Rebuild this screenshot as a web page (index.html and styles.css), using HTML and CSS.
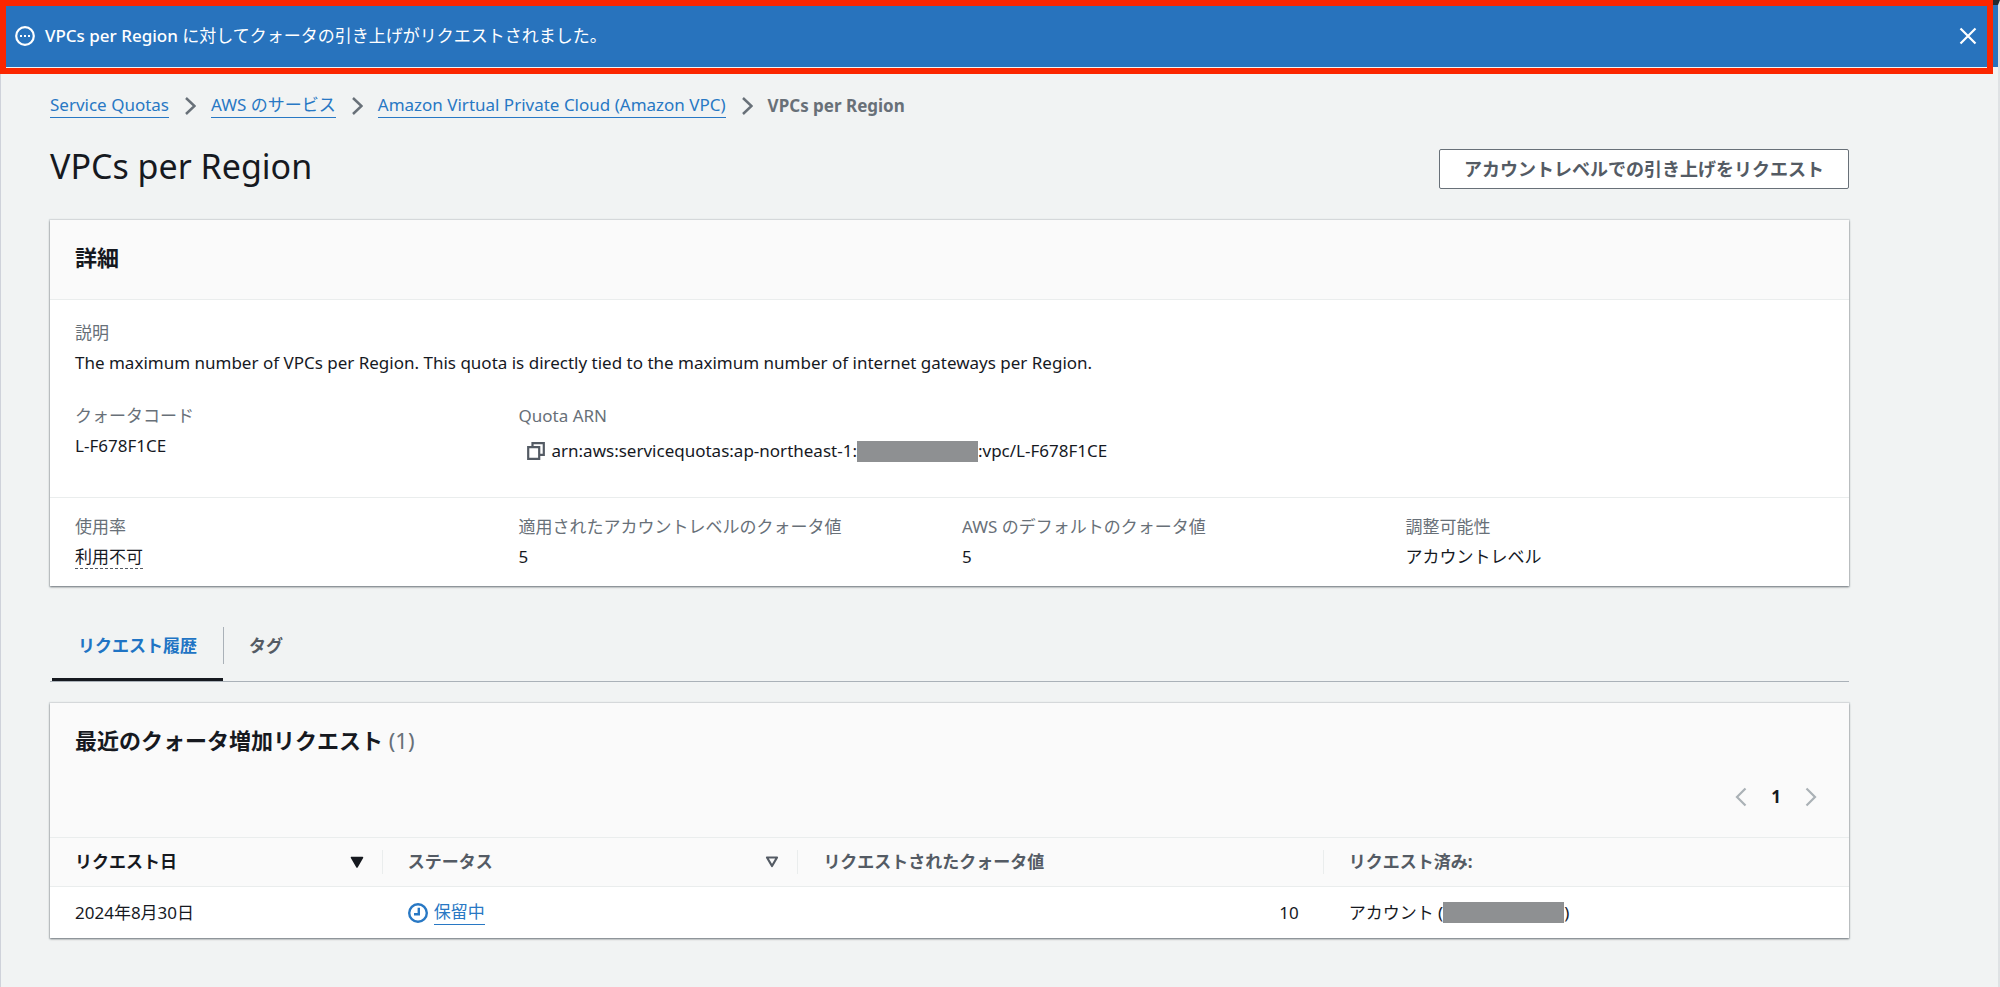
FILE: index.html
```html
<!DOCTYPE html>
<html lang="ja">
<head>
<meta charset="utf-8">
<title>VPCs per Region - Service Quotas</title>
<link rel="stylesheet" href="styles.css">
</head>
<body>
<div class="page">
  <div class="flash" role="status">
    <svg class="icon icon-flash" viewBox="0 0 20 20" aria-hidden="true"><circle cx="10" cy="10" r="8.8" fill="none" stroke="currentColor" stroke-width="2.2"/><path d="M5 9h2v2H5zM9 9h2v2H9zM13 9h2v2h-2z" fill="currentColor"/></svg>
    <p class="flash-text"><span class="semi">VPCs per Region</span> に対してクォータの引き上げがリクエストされました。</p>
    <button class="icon-button flash-close" type="button" aria-label="閉じる">
      <svg class="icon icon-close" viewBox="0 0 18 18" aria-hidden="true"><path d="M1.5 1.5 16.500 16.500M16.500 1.500 1.500 16.500" fill="none" stroke="currentColor" stroke-width="2.2"/></svg>
    </button>
    <div class="highlight"></div>
  </div>

  <main class="main">
    <nav class="breadcrumbs" aria-label="パンくず">
      <a class="link" href="#">Service Quotas</a>
      <svg class="icon icon-crumb" viewBox="0 0 12 18" aria-hidden="true"><path d="M2 1 10.500 9 2 17" fill="none" stroke="currentColor" stroke-width="2.5"/></svg>
      <a class="link" href="#">AWS のサービス</a>
      <svg class="icon icon-crumb" viewBox="0 0 12 18" aria-hidden="true"><path d="M2 1 10.500 9 2 17" fill="none" stroke="currentColor" stroke-width="2.5"/></svg>
      <a class="link" href="#">Amazon Virtual Private Cloud (Amazon VPC)</a>
      <svg class="icon icon-crumb" viewBox="0 0 12 18" aria-hidden="true"><path d="M2 1 10.500 9 2 17" fill="none" stroke="currentColor" stroke-width="2.5"/></svg>
      <span class="crumb-current">VPCs per Region</span>
    </nav>

    <header class="page-header">
      <h1 class="page-title">VPCs per Region</h1>
      <button class="button" type="button">アカウントレベルでの引き上げをリクエスト</button>
    </header>

    <section class="card">
      <div class="card-header"><h2 class="card-title">詳細</h2></div>
      <dl class="details details-main">
        <div class="field field-wide"><dt>説明</dt><dd>The maximum number of VPCs per Region. This quota is directly tied to the maximum number of internet gateways per Region.</dd></div>
        <div class="field"><dt>クォータコード</dt><dd>L-F678F1CE</dd></div>
        <div class="field"><dt>Quota ARN</dt>
          <dd class="arn">
            <button class="icon-button copy" type="button" aria-label="コピー"><svg class="icon icon-copy" viewBox="0 0 18 18" aria-hidden="true"><path d="M1.200 5.200h11v11.600h-11zM5.500 5V1.200h11.300v11.600H12.500" fill="none" stroke="currentColor" stroke-width="2.2"/></svg></button>
            <span>arn:aws:servicequotas:ap-northeast-1:</span><span class="redacted"></span><span>:vpc/L-F678F1CE</span>
          </dd>
        </div>
      </dl>
      <dl class="details details-values">
        <div class="field"><dt>使用率</dt><dd><span class="hint">利用不可</span></dd></div>
        <div class="field"><dt>適用されたアカウントレベルのクォータ値</dt><dd>5</dd></div>
        <div class="field"><dt>AWS のデフォルトのクォータ値</dt><dd>5</dd></div>
        <div class="field"><dt>調整可能性</dt><dd>アカウントレベル</dd></div>
      </dl>
    </section>

    <div class="tabs" role="tablist">
      <button class="tab tab-active" type="button" role="tab" aria-selected="true">リクエスト履歴</button>
      <button class="tab" type="button" role="tab" aria-selected="false">タグ</button>
    </div>

    <section class="card">
      <div class="table-header">
        <h2 class="card-title">最近のクォータ増加リクエスト <span class="counter">(1)</span></h2>
        <nav class="pagination" aria-label="ページ">
          <button class="icon-button" type="button" aria-label="前へ"><svg class="icon icon-page" viewBox="0 0 12 20" aria-hidden="true"><path d="M10.500 1.500 2 10l8.500 8.500" fill="none" stroke="currentColor" stroke-width="2.2"/></svg></button>
          <button class="page-number" type="button">1</button>
          <button class="icon-button" type="button" aria-label="次へ"><svg class="icon icon-page" viewBox="0 0 12 20" aria-hidden="true"><path d="M1.500 1.500 10 10l-8.500 8.500" fill="none" stroke="currentColor" stroke-width="2.2"/></svg></button>
        </nav>
      </div>
      <table class="table">
        <colgroup><col class="col-date"><col class="col-status"><col class="col-value"><col></colgroup>
        <thead>
          <tr>
            <th scope="col"><div class="th th-sorted">リクエスト日<svg class="icon icon-sort" viewBox="0 0 14 12" aria-hidden="true"><path d="M1.500 1.500h11L7 11z" fill="currentColor" stroke="currentColor" stroke-width="1.5" stroke-linejoin="round"/></svg></div></th>
            <th scope="col"><div class="th">ステータス<svg class="icon icon-sort" viewBox="0 0 14 12" aria-hidden="true"><path d="M2 1.500h10L7 10z" fill="none" stroke="currentColor" stroke-width="2.2" stroke-linejoin="round"/></svg></div></th>
            <th scope="col"><div class="th">リクエストされたクォータ値</div></th>
            <th scope="col"><div class="th">リクエスト済み:</div></th>
          </tr>
        </thead>
        <tbody>
          <tr>
            <td>2024年8月30日</td>
            <td><div class="status"><svg class="icon icon-flash" viewBox="0 0 20 20" aria-hidden="true"><circle cx="10" cy="10" r="8.8" fill="none" stroke="currentColor" stroke-width="2.4"/><path d="M10.800 4.800v6.400H6" fill="none" stroke="currentColor" stroke-width="2.4"/></svg><a class="link" href="#">保留中</a></div></td>
            <td class="number">10</td>
            <td><div class="account">アカウント (<span class="redacted"></span>)</div></td>
          </tr>
        </tbody>
      </table>
    </section>
  </main>
</div>
</body>
</html>
```
FILE: styles.css
```css
* { box-sizing: border-box; }

body {
  margin: 0;
  background: #f1f3f3;
  color: #16191f;
  font-family: "Noto Sans", "Noto Sans CJK JP", sans-serif;
  font-size: 17px;
  line-height: 24px;
}

h1, h2, p, dl, dd { margin: 0; }

button {
  font: inherit;
  color: inherit;
  cursor: pointer;
}

.page {
  min-height: 100vh;
  border-top: 5px solid #232a31;
  border-left: 1px solid #cfd2da;
  border-right: 2px solid #dfe2e4;
}

.icon { display: block; flex: none; }
.icon-flash { width: 20px; height: 20px; }
.icon-close { width: 18px; height: 18px; }
.icon-crumb { width: 12px; height: 18px; color: #687078; }
.icon-copy { width: 18px; height: 18px; color: #545b64; }
.icon-page { width: 12px; height: 20px; color: #aab1b6; }
.icon-sort { width: 14px; height: 12px; }

.icon-button {
  display: flex;
  padding: 0;
  border: 0;
  background: none;
}

.flash {
  position: relative;
  display: flex;
  align-items: center;
  gap: 10px;
  height: 62px;
  padding: 0 21px 0 14px;
  background: #2873bd;
  color: #fff;
}
.flash-text { flex: 1; }
.semi { font-weight: 500; }

.highlight {
  position: absolute;
  inset: -5px 5px -7px -1px;
  border: 6px solid #fb2600;
  pointer-events: none;
}

.main { padding: 26px 149px 50px 49px; }

.link {
  color: #2878c4;
  text-decoration: none;
  border-bottom: 1px solid currentColor;
}

.breadcrumbs {
  display: flex;
  align-items: center;
  gap: 15px;
}
.crumb-current { color: #687078; font-weight: 700; }

.page-header {
  display: flex;
  align-items: flex-end;
  justify-content: space-between;
  margin: 26px 0 31px;
}
.page-title {
  padding-bottom: 1px;
  font-size: 34px;
  line-height: 44px;
  font-weight: 400;
}
.button {
  height: 40px;
  padding: 0 24px;
  border: 1px solid #687078;
  border-radius: 2px;
  background: #fff;
  color: #545b64;
  font-size: 18px;
  font-weight: 700;
}

.card {
  background: #fff;
  box-shadow: 0 1px 2px #6c7378, 0 0 1px 1px #dde0e2;
}
.card-header {
  padding: 22px 25px 27px;
  background: #fafafa;
  border-bottom: 1px solid #eaeded;
}
.card-title {
  font-size: 22px;
  line-height: 30px;
  font-weight: 700;
}
.counter { color: #687078; font-weight: 400; }

.details {
  display: grid;
  grid-template-columns: repeat(4, minmax(0, 1fr));
  column-gap: 25px;
  row-gap: 29px;
  padding: 21px 25px;
}
.details-main { padding-bottom: 34px; }
.details-values {
  padding: 17px 25px;
  border-top: 1px solid #eaeded;
}
.field dt { color: #687078; margin-bottom: 6px; }
.field-wide { grid-column: 1 / -1; }
.arn {
  display: flex;
  align-items: center;
  padding-top: 5px;
  white-space: nowrap;
}
.copy { margin: 0 7px 0 8px; }
.redacted {
  display: inline-block;
  flex: none;
  width: 121px;
  height: 21px;
  background: #8e9092;
}
.hint { border-bottom: 1px dashed #545b64; }

.tabs {
  display: flex;
  margin: 30px 0 21px;
  padding-left: 2px;
  border-bottom: 1px solid #aab1b8;
}
.tab {
  position: relative;
  height: 65px;
  padding: 0 26px 2px;
  border: 0;
  border-bottom: 3px solid transparent;
  background: none;
  color: #545b64;
  font-weight: 700;
}
.tab-active { color: #2074c4; border-color: #16191f; }
.tab-active::after {
  content: "";
  position: absolute;
  top: 11px;
  right: -1px;
  width: 1px;
  height: 37px;
  background: #aab1b8;
}

.table-header { padding: 22px 25px 28px; background: #fafafa; }
.pagination {
  display: flex;
  align-items: center;
  justify-content: flex-end;
  gap: 24px;
  margin-top: 30px;
  padding-right: 7px;
}
.page-number {
  padding: 0;
  border: 0;
  background: none;
  font-weight: 700;
}

.table {
  width: 100%;
  table-layout: fixed;
  border-collapse: collapse;
}
.col-date { width: 18.5%; }
.col-status { width: 23.1%; }
.col-value { width: 29.2%; }
.table th {
  padding: 12px 0;
  background: #fafafa;
  border-top: 1px solid #eaeded;
  border-bottom: 1px solid #eaeded;
  color: #545b64;
  font-weight: 700;
  text-align: left;
}
.th {
  display: flex;
  align-items: center;
  justify-content: space-between;
  padding: 0 18px 0 25px;
  border-right: 1px solid #eaeded;
}
.table th:last-child .th { border-right: 0; }
.th-sorted { color: #16191f; }
.table td { padding: 13px 25px; }
.table .number { text-align: right; }
.status { display: flex; align-items: center; gap: 6px; color: #2878c4; }
.account { display: flex; align-items: center; white-space: pre; }
```
